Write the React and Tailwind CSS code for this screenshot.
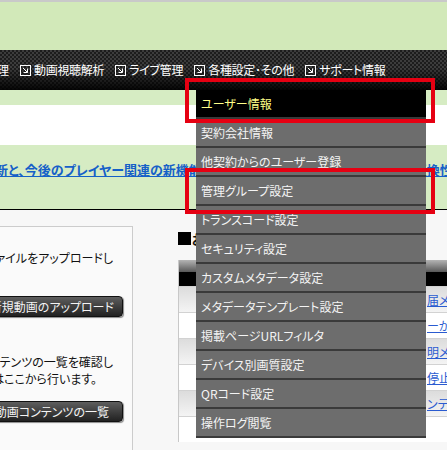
import React from "react";

const NavIcon = () => (
  <svg width="11" height="11" viewBox="0 0 11 11" className="shrink-0">
    <rect x="0.5" y="0.5" width="10" height="10" fill="none" stroke="#ffffff" strokeWidth="1" />
    <path d="M3 3 L7.5 7.5 M3.5 7.5 H7.5 V3.5" fill="none" stroke="#ffffff" strokeWidth="1" />
  </svg>
);

const navItems = ["動画視聴解析", "ライブ管理", "各種設定･その他", "サポート情報"];

const menuItems = [
  "ユーザー情報",
  "契約会社情報",
  "他契約からのユーザー登録",
  "管理グループ設定",
  "トランスコード設定",
  "セキュリティ設定",
  "カスタムメタデータ設定",
  "メタデータテンプレート設定",
  "掲載ページURLフィルタ",
  "デバイス別画質設定",
  "QRコード設定",
  "操作ログ閲覧",
];

const rows = [
  { date: "2014/03/12", link: "届メンテナンスのお知らせ", gray: true },
  { date: "2014/03/05", link: "ーがエラーとなる現象について", gray: false },
  { date: "2014/02/26", link: "明メンテナンスのお知らせ", gray: true },
  { date: "2014/02/18", link: "停止を伴うメンテナンス", gray: false },
  { date: "2014/02/10", link: "ンテンツ管理機能の追加", gray: true },
  { date: "2014/02/01", link: "", gray: false },
];

export default function App() {
  return (
    <div className="relative w-[447px] h-[450px] overflow-hidden bg-[#f7f7f7] font-['Noto_Sans_CJK_JP','Liberation_Sans',sans-serif] [font-feature-settings:'palt'] leading-none">
      <div className="h-[2px] bg-[#c9c9c9]" />
      <div className="h-[48px] bg-[#d2e9b9]" />
      <nav className="h-[40px] flex items-center whitespace-nowrap text-white text-[12px] bg-[image:linear-gradient(to_bottom,rgba(0,0,0,0)_45%,rgba(0,0,0,0.9)_100%),repeating-conic-gradient(#3c3c3c_0%_25%,#1c1c1c_0%_50%)] bg-[length:100%_100%,4px_4px]">
        <div className="flex items-center gap-[11px] -ml-[15px]">
          <span>管理</span>
          {navItems.map((t) => (
            <span key={t} className="flex items-center gap-[3px]">
              <NavIcon />
              <span className="tracking-[-0.3px]">{t}</span>
            </span>
          ))}
        </div>
      </nav>
      <div className="h-[15px] bg-[#d6ecc3]" />
      <div className="h-[40px] bg-white" />
      <div className="h-[65px] bg-[#d6ecc3] border-b border-black pt-[17px] whitespace-nowrap">
        <span className="block -ml-[5px] text-[13px] leading-[15px] font-bold text-[#1560c8] underline">
          新と、今後のプレイヤー関連の新機能の提供予定についてのお知らせ詳細と互換性について
        </span>
      </div>

      <main className="flex pt-[16px]">
        <div className="w-[300px] -ml-[167px] shrink-0 border-t border-r border-[#cccccc] bg-[#fafafa] pr-[9px] pt-[22px] h-[240px] text-[12px] text-[#111] whitespace-nowrap">
          <div className="text-right leading-[17px] mr-[10px]">新しい動画ファイルをアップロードし</div>
          <div className="mt-[30px] ml-auto w-fit h-[21px] rounded-[4px] bg-gradient-to-b from-[#5e5e5e] to-[#222222] border border-[#111111] text-[#f4f4f4] flex items-center pl-[14px] pr-[8px] shadow-[1px_1px_1px_rgba(0,0,0,0.45)]">
            新規動画のアップロード
          </div>
          <div className="mt-[36px] text-right leading-[17px] mr-[10px]">動画コンテンツの一覧を確認し</div>
          <div className="text-right leading-[17px] mr-[26px]">編集はここから行います。</div>
          <div className="mt-[14px] ml-auto w-fit h-[21px] rounded-[4px] bg-gradient-to-b from-[#5e5e5e] to-[#222222] border border-[#111111] text-[#f4f4f4] flex items-center pl-[14px] pr-[13px] shadow-[1px_1px_1px_rgba(0,0,0,0.45)]">
            動画コンテンツの一覧
          </div>
        </div>

        <div className="ml-[45px] w-[400px] shrink-0 pt-[6px]">
          <div className="flex items-center h-[13px] whitespace-nowrap">
            <span className="w-[13px] h-[13px] bg-black shrink-0" />
            <span className="ml-[1px] text-[13px] font-bold text-[#111]">お知らせ</span>
          </div>
          <div className="mt-[15px] border-l border-[#c8c8c8]">
            <div className="h-[26px] bg-[linear-gradient(to_bottom,#b4b4b4_0%,#5a5a5a_45%,#000000_47%,#000000_100%)]" />
            {rows.map((r, i) => (
              <div
                key={i}
                className={
                  r.gray
                    ? "h-[26px] flex items-center whitespace-nowrap text-[12px] border-t border-[#d2d2d2] bg-gradient-to-b from-[#dcdcdc] to-[#f4f4f4]"
                    : "h-[26px] flex items-center whitespace-nowrap text-[12px] border-t border-[#d2d2d2] bg-white"
                }
              >
                <span className="w-[248px] shrink-0 pl-[30px] text-[#333]">{r.date}</span>
                <span className="text-[#2a5bd0] underline">{r.link}</span>
              </div>
            ))}
          </div>
        </div>
      </main>

      <div className="absolute left-[196px] top-[90px] w-[230px] text-[12px] whitespace-nowrap">
        {menuItems.map((t, i) => (
          <div
            key={t}
            className={
              i === 0
                ? "h-[29px] flex items-center pl-[5px] bg-black text-[#ffff88] border-b-2 border-[#3a3a3a]"
                : "h-[29px] flex items-center pl-[5px] bg-[#6d6d6d] text-[#f4f4f4] border-b-2 border-[#3a3a3a]"
            }
          >
            {t}
          </div>
        ))}
      </div>

      <div className="absolute left-[185px] top-[78px] w-[250px] h-[45px] border-4 border-[#e60012]" />
      <div className="absolute left-[185px] top-[168px] w-[250px] h-[46px] border-4 border-[#e60012]" />
    </div>
  );
}
